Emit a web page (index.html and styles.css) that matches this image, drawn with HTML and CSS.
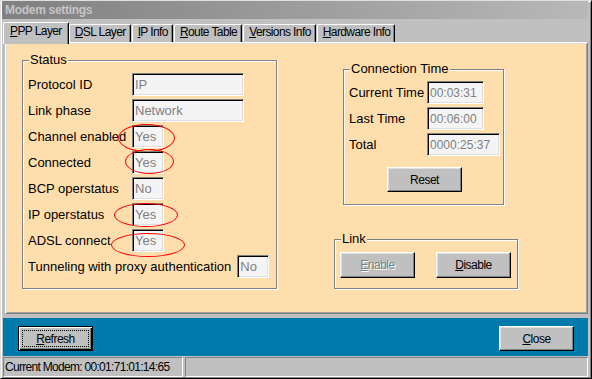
FILE: index.html
```html
<!DOCTYPE html>
<html lang="en">
<head>
    <meta charset="UTF-8">
    <title>Modem settings</title>
    <link rel="stylesheet" href="styles.css">
</head>
<body>
    <div class="window">
        <div class="titlebar">Modem settings</div>

        <div class="tabs">
            <div class="tab active"><u>P</u>PP Layer</div>
            <div class="tab"><u>D</u>SL Layer</div>
            <div class="tab"><u>I</u>P Info</div>
            <div class="tab"><u>R</u>oute Table</div>
            <div class="tab"><u>V</u>ersions Info</div>
            <div class="tab"><u>H</u>ardware Info</div>
        </div>

        <div class="panel">
            <div class="group status">
                <span class="group-title">Status</span>
                <div class="row"><label>Protocol ID</label><input class="field wide" value="IP" readonly></div>
                <div class="row"><label>Link phase</label><input class="field wide" value="Network" readonly></div>
                <div class="row">
                    <label>Channel enabled</label>
                    <span class="mark"><input class="field small" value="Yes" readonly><span class="ring ring-a"></span></span>
                </div>
                <div class="row">
                    <label>Connected</label>
                    <span class="mark"><input class="field small" value="Yes" readonly><span class="ring ring-b"></span></span>
                </div>
                <div class="row"><label>BCP operstatus</label><input class="field small" value="No" readonly></div>
                <div class="row">
                    <label>IP operstatus</label>
                    <span class="mark"><input class="field small" value="Yes" readonly><span class="ring ring-c"></span></span>
                </div>
                <div class="row">
                    <label>ADSL connect</label>
                    <span class="mark"><input class="field small" value="Yes" readonly><span class="ring ring-d"></span></span>
                </div>
                <div class="row long"><label>Tunneling with proxy authentication</label><input class="field small" value="No" readonly></div>
            </div>

            <div class="side">
                <div class="group conn">
                    <span class="group-title">Connection Time</span>
                    <div class="row"><label>Current Time</label><input class="field time" value="00:03:31" readonly></div>
                    <div class="row"><label>Last Time</label><input class="field time" value="00:06:00" readonly></div>
                    <div class="row"><label>Total</label><input class="field time total" value="0000:25:37" readonly></div>
                    <button class="btn reset">Reset</button>
                </div>

                <div class="group link">
                    <span class="group-title">Link</span>
                    <button class="btn tall" disabled><u>E</u>nable</button>
                    <button class="btn tall"><u>D</u>isable</button>
                </div>
            </div>
        </div>

        <div class="buttonbar">
            <button class="btn default"><u>R</u>efresh</button>
            <button class="btn"><u>C</u>lose</button>
        </div>

        <div class="statusbar">
            <div class="pane first">Current Modem: 00:01:71:01:14:65</div>
            <div class="pane rest"></div>
        </div>
    </div>
</body>
</html>
```

FILE: styles.css
```css
/* Reset */
body, input, button {
    margin: 0;
    font-family: 'Liberation Sans', Arial, sans-serif;
}

body {
    background: #c0c0c0;
}

/* Window frame */
.window {
    width: 592px;
    height: 379px;
    box-sizing: border-box;
    border: 1px solid;
    border-color: #dfdfdf #000 #000 #dfdfdf;
    box-shadow: inset 1px 1px #fff, inset -1px -1px #808080;
    padding: 0 3px 1px 2px;
    display: flex;
    flex-direction: column;
    background: #c0c0c0;
}

.titlebar {
    height: 18px;
    line-height: 18px;
    padding-left: 3px;
    margin-left: -1px;
    background: linear-gradient(to right, #808080, #b8b8b8);
    color: #c4c4c4;
    font-size: 12px;
    font-weight: bold;
    letter-spacing: -0.3px;
}

/* Tabs */
.tabs {
    height: 23px;
    display: flex;
    align-items: flex-end;
}

.tab {
    height: 18px;
    box-sizing: border-box;
    padding: 0 4px 0 5px;
    margin-left: 1px;
    border: 1px solid;
    border-bottom: none;
    border-color: #fff #000 transparent #fff;
    border-radius: 2px 2px 0 0;
    box-shadow: inset -1px 0 #808080;
    font-size: 12px;
    letter-spacing: -0.6px;
    line-height: 15px;
}

.tab.active {
    height: 22px;
    margin: 0 -1px -2px 0;
    padding: 1px 6px 0;
    position: relative;
    z-index: 1;
    background: #c0c0c0;
}

/* Tab page */
.panel {
    height: 272px;
    box-sizing: border-box;
    margin-left: 2px;
    border: 1px solid;
    border-color: #fff #808080 #808080 #fff;
    box-shadow: inset 1px 1px #dfdfdf, inset -1px -1px #a0a0a0;
    background: #ffdead;
    display: flex;
    align-items: flex-start;
    gap: 57px;
    padding: 17px 0 0 16px;
    font-size: 13px;
}

.group {
    position: relative;
    box-sizing: border-box;
    border: 1px solid #808080;
    box-shadow: 1px 1px #fff, inset 1px 1px #fff;
}

.group-title {
    position: absolute;
    top: -9px;
    left: 6px;
    padding: 0 1px;
    background: #ffdead;
    line-height: 16px;
}

.row {
    height: 23px;
    display: flex;
    align-items: center;
}

.row label {
    width: 104px;
    flex: none;
}

.row.long label {
    width: auto;
    margin-right: 6px;
}

.status {
    width: 255px;
    padding: 12px 0 10px 5px;
    display: flex;
    flex-direction: column;
    gap: 3px;
}

.field {
    height: 23px;
    box-sizing: border-box;
    border: 1px solid;
    border-color: #808080 #fff #fff #808080;
    box-shadow: inset 1px 1px #000, inset -1px -1px #dfdfdf;
    background: #f4f4f4;
    color: #808080;
    font-size: 13px;
    padding: 0 2px;
    outline: none;
}

.wide { width: 112px; }
.small { width: 32px; }

/* Red marker circles */
.mark {
    position: relative;
    display: flex;
}

.ring {
    position: absolute;
    border: 1px solid #f00;
    border-radius: 50%;
    box-sizing: border-box;
}

.ring-a { left: -14px; top: -1px; width: 57px; height: 28px; }
.ring-b { left: -7px; top: -2px; width: 49px; height: 25px; }
.ring-c { left: -18px; top: 0; width: 64px; height: 24px; }
.ring-d { left: -21px; top: 4px; width: 74px; height: 24px; }

.side {
    display: flex;
    flex-direction: column;
    align-items: flex-start;
    gap: 34px;
    padding-top: 9px;
}

.conn {
    width: 161px;
    margin-left: 9px;
    padding: 11px 0 12px 5px;
    display: flex;
    flex-direction: column;
    gap: 3px;
}

.conn .row label {
    width: 78px;
}

.time {
    width: 57px;
    font-size: 12px;
}

.time.total {
    width: 73px;
}

.reset {
    margin: 8px 0 0 38px;
}

.link {
    width: 184px;
    padding: 12px 0 10px 5px;
    display: flex;
    gap: 21px;
}

/* Buttons */
.btn {
    width: 75px;
    height: 25px;
    box-sizing: border-box;
    padding: 0;
    background: #c0c0c0;
    border: 1px solid;
    border-color: #fff #000 #000 #fff;
    box-shadow: inset -1px -1px #808080, inset 1px 1px #dfdfdf;
    color: #000;
    font-size: 12px;
    letter-spacing: -0.5px;
}

.btn.tall {
    height: 26px;
}

.btn:disabled {
    color: #808080;
    text-shadow: 1px 1px #fff;
}

.btn.default {
    border-color: #000;
    box-shadow: inset 1px 1px #fff, inset -1px -1px #000, inset -2px -2px #808080;
    outline: 1px dotted #000;
    outline-offset: -5px;
}

.buttonbar {
    height: 38px;
    box-sizing: border-box;
    margin-top: 4px;
    background: #007aab;
    display: flex;
    justify-content: space-between;
    align-items: flex-start;
    padding: 8px 14px 0 15px;
}

/* Status bar */
.statusbar {
    height: 20px;
    margin-top: 1px;
    display: flex;
    gap: 2px;
}

.pane {
    box-sizing: border-box;
    border: 1px solid;
    border-color: #808080 #fff #fff #808080;
    padding-left: 1px;
    font-size: 12px;
    letter-spacing: -0.7px;
    line-height: 18px;
}

.pane.first { width: 180px; }
.pane.rest { flex: 1; }
```
